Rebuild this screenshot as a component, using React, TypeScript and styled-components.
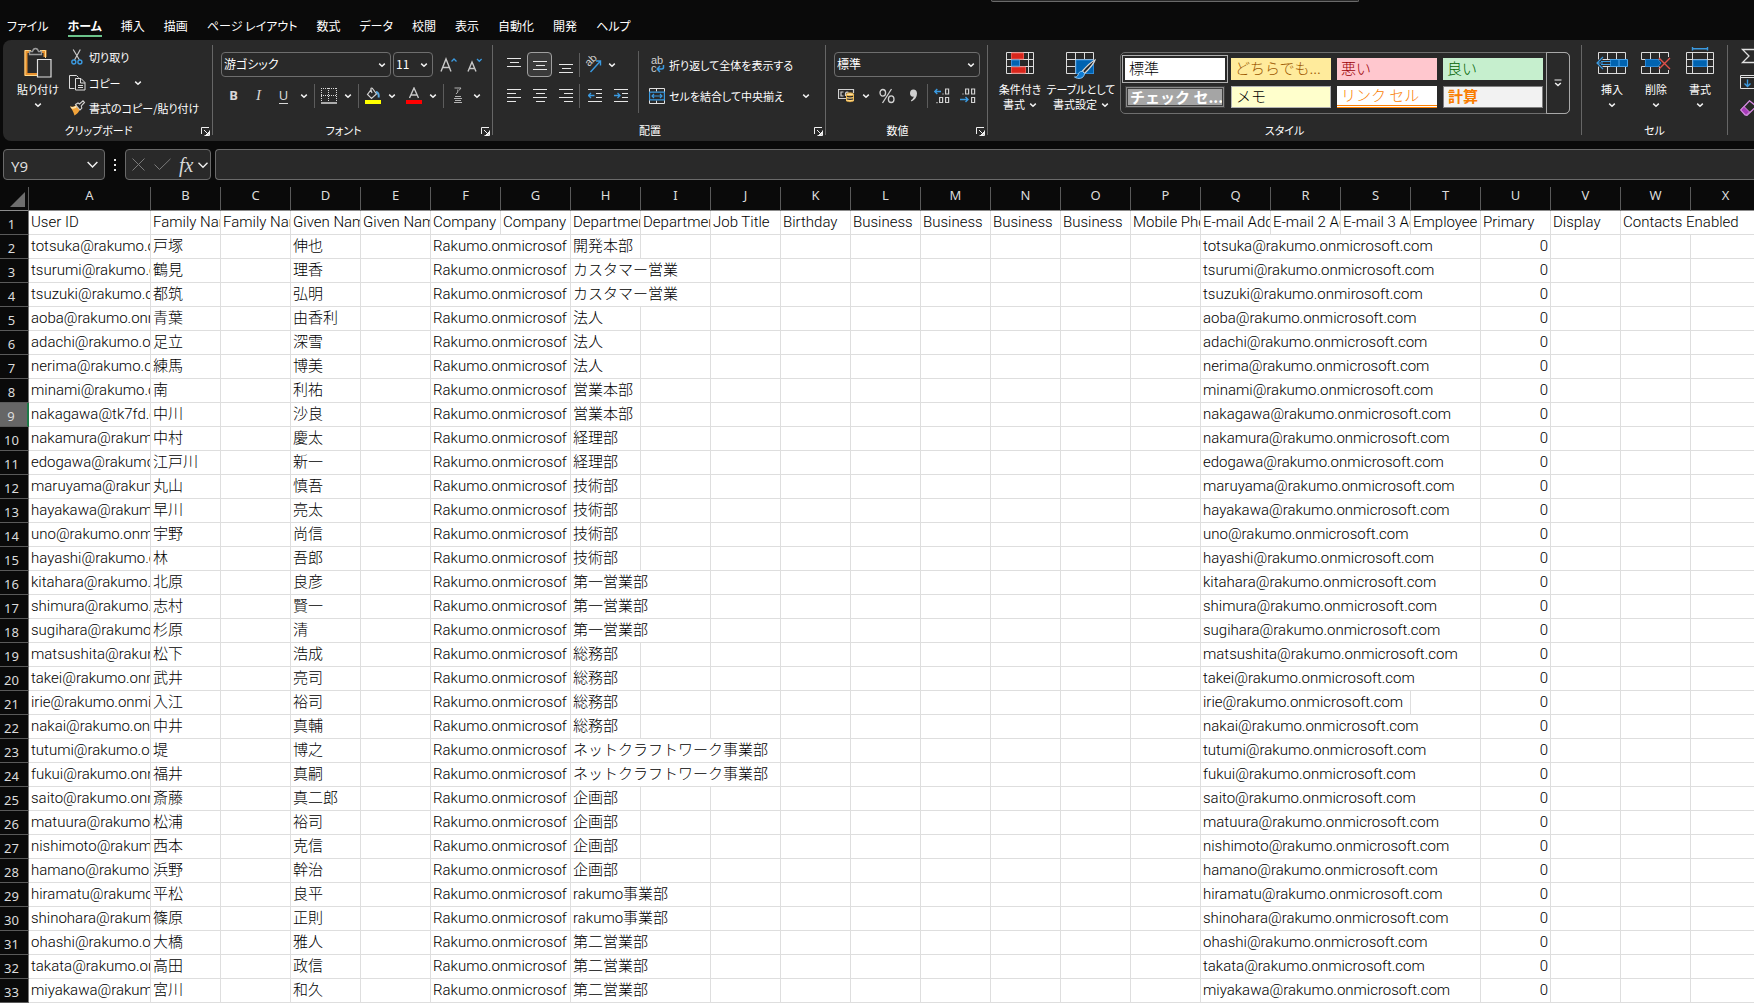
import React from "react";
import styled, { createGlobalStyle, css } from "styled-components";

const UI_FONT = '"Noto Sans", "Noto Sans CJK JP", sans-serif';
const KANA_FONT = '"Noto Sans CJK JP", sans-serif';
const CELL_FONT = 'Roboto, "Noto Sans CJK JP", sans-serif';

const GlobalStyle = createGlobalStyle`
  *, *::before, *::after { box-sizing: border-box; }
  html, body { margin: 0; background: #0a0a0a; }
  body { overflow: hidden; font-family: ${KANA_FONT}; color: #fff; }
  button, select, input { font: inherit; color: inherit; margin: 0; }
  svg { flex: none; }
`;

const Window = styled.div`
  min-height: 100vh;
  overflow: hidden;
  background: #0a0a0a;
`;

/* ---------- title strip and tabs ---------- */

const TitleStrip = styled.div`
  display: flex;
  justify-content: center;
  height: 12px;
  padding-left: 595px;
`;

const SearchEdge = styled.div`
  width: 368px;
  height: 2px;
  border: 1px solid #6a6a6a;
  border-top: 0;
  border-radius: 0 0 3px 3px;
  background: #292929;
`;

const Tabs = styled.nav`
  display: flex;
  height: 28px;
  padding-left: 7px;
  gap: 19px;
`;

const Tab = styled.button<{ $active?: boolean }>`
  height: 25px;
  padding: 4px 0 0;
  border: 0;
  border-bottom: 2px solid ${(p) => (p.$active ? "#6cc38b" : "transparent")};
  background: none;
  font-size: 12px;
  line-height: 19px;
  font-weight: ${(p) => (p.$active ? 700 : 400)};
  font-feature-settings: "palt";
  white-space: nowrap;
`;

/* ---------- ribbon ---------- */

const Ribbon = styled.div`
  display: flex;
  height: 101px;
  margin-left: 3px;
  padding-top: 5px;
  border-radius: 8px 0 0 8px;
  background: #292929;
  overflow: hidden;
  font-size: 11px;
  font-feature-settings: "palt";
`;

const GroupBox = styled.section<{ $width: number }>`
  flex: none;
  display: flex;
  flex-direction: column;
  width: ${(p) => p.$width}px;
`;

const GroupBody = styled.div<{ $pad?: number }>`
  display: flex;
  height: 75px;
  padding-left: ${(p) => p.$pad ?? 8}px;
`;

const GroupFoot = styled.div<{ $launcher?: boolean }>`
  display: grid;
  grid-template-columns: 1fr ${(p) => (p.$launcher ? 18 : 0)}px;
  align-items: center;
  height: 20px;
  line-height: 20px;
  text-align: center;
`;

const Launcher = styled.button`
  display: flex;
  padding: 2px 0 0 7px;
  border: 0;
  background: none;
`;

const GroupDivider = styled.div`
  flex: none;
  width: 1px;
  height: 90px;
  background: #666;
`;

const Stack = styled.div<{ $width?: number }>`
  flex: none;
  display: flex;
  flex-direction: column;
  gap: 6px;
  padding-top: 7px;
  width: ${(p) => (p.$width ? `${p.$width}px` : "auto")};
`;

const Row = styled.div<{ $gap?: number }>`
  display: flex;
  align-items: center;
  height: 25px;
  gap: ${(p) => p.$gap ?? 0}px;
`;

const Tool = styled.button<{ $width?: number; $on?: boolean }>`
  flex: none;
  display: flex;
  align-items: center;
  justify-content: center;
  width: ${(p) => p.$width ?? 22}px;
  height: 25px;
  padding: 0;
  border: 1px solid ${(p) => (p.$on ? "#a0a0a0" : "transparent")};
  border-radius: 4px;
  background: ${(p) => (p.$on ? "#3a3a3a" : "none")};
`;

const Thin = styled.div<{ $left: number; $right: number; $tall?: boolean }>`
  flex: none;
  width: 1px;
  height: ${(p) => (p.$tall ? 62 : 24)}px;
  margin: ${(p) => (p.$tall ? 6 : 0)}px ${(p) => p.$right}px 0 ${(p) => p.$left}px;
  background: #5c5c5c;
`;

const Spacer = styled.div<{ $size: number }>`
  flex: none;
  width: ${(p) => p.$size}px;
`;

const TextTool = styled.button`
  display: flex;
  align-items: center;
  gap: 2px;
  height: 25px;
  padding: 0;
  border: 0;
  background: none;
  white-space: nowrap;
`;

const IconSlot = styled.span`
  display: flex;
  justify-content: center;
  width: 20px;
`;

const ClipboardList = styled.div`
  display: flex;
  flex-direction: column;
  gap: 1px;
`;

const SplitRow = styled.div`
  display: flex;
  align-items: center;
  justify-content: space-between;
  height: 25px;
`;

const BigTool = styled.button<{ $width: number }>`
  flex: none;
  display: flex;
  flex-direction: column;
  align-items: center;
  width: ${(p) => p.$width}px;
  height: 75px;
  padding: 2px 0 0;
  border: 0;
  background: none;
  line-height: 15px;
  white-space: nowrap;
`;

const BigIcon = styled.span`
  display: block;
  height: 35px;
`;

const BigLine = styled.span`
  display: flex;
  align-items: center;
  gap: 4px;
  height: 15px;
`;

const PickerBox = styled.label<{ $width: number }>`
  flex: none;
  display: grid;
  grid-template-columns: 1fr 16px;
  align-items: center;
  width: ${(p) => p.$width}px;
  height: 25px;
  border: 1px solid #6e6e6e;
  border-radius: 4px;
  background: #292929;
`;

const Picker = styled.select`
  grid-area: 1 / 1 / 2 / 3;
  width: 100%;
  height: 23px;
  padding: 0 0 1px 2px;
  border: 0;
  outline: 0;
  appearance: none;
  background: none;
  font-size: 12px;
  font-feature-settings: "palt";
  line-height: 20px;
`;

const PickerArrow = styled.span`
  grid-area: 1 / 2 / 2 / 3;
  display: flex;
  justify-content: center;
  pointer-events: none;
`;

const Letter = styled.span<{ $kind: "b" | "i" | "u" }>`
  font-family: ${(p) => (p.$kind === "i" ? '"Liberation Serif", serif' : UI_FONT)};
  font-size: ${(p) => (p.$kind === "i" ? 15 : 13)}px;
  line-height: 15px;
  color: #d8d8d8;
  ${(p) => p.$kind === "b" && css`font-weight: 700;`}
  ${(p) => p.$kind === "i" && css`font-style: italic;`}
  ${(p) => p.$kind === "u" && css`border-bottom: 1px solid #d8d8d8;`}
`;

/* ---------- style gallery ---------- */

const Gallery = styled.div`
  flex: none;
  display: flex;
  height: 62px;
  margin: 7px 0 0 6px;
  border: 1px solid #6e6e6e;
  border-radius: 5px;
`;

const Swatches = styled.div`
  display: grid;
  grid-template-columns: repeat(4, 100px);
  grid-auto-rows: 22px;
  gap: 6px;
  padding: 5px 4px;
`;

type SwatchLook = "plain" | "selected" | "check" | "note" | "link" | "calc";

const Swatch = styled.button<{ $bg: string; $fg: string; $look: SwatchLook }>`
  padding: 0 4px 2px;
  border: 0;
  background: ${(p) => p.$bg};
  color: ${(p) => p.$fg};
  font-size: 15px;
  line-height: 18px;
  font-weight: 300;
  font-feature-settings: normal;
  text-align: left;
  white-space: nowrap;
  overflow: hidden;
  ${(p) => p.$look === "selected" && css`outline: 1px solid #b0b0b0; outline-offset: 2px;`}
  ${(p) =>
    p.$look === "check" &&
    css`
      border: 3px double #3f3f3f;
      outline: 1px solid #8a8a8a;
      outline-offset: -2px;
      padding: 0 2px 1px;
      line-height: 14px;
      font-weight: 700;
    `}
  ${(p) => p.$look === "note" && css`border: 1px solid #b2b2b2;`}
  ${(p) => p.$look === "link" && css`border-bottom: 3px double #ff8001;`}
  ${(p) => p.$look === "calc" && css`border: 1px solid #7f7f7f; font-weight: 700;`}
`;

const GalleryMore = styled.button`
  display: flex;
  align-items: center;
  justify-content: center;
  width: 24px;
  height: 62px;
  margin: -1px;
  padding: 0;
  border: 1px solid #a8a8a8;
  border-radius: 0 5px 5px 0;
  background: none;
`;

const EditTools = styled.div`
  display: flex;
  flex-direction: column;
  gap: 10px;
  padding-top: 3px;
`;

const PlainButton = styled.button`
  display: flex;
  padding: 0;
  border: 0;
  background: none;
`;

/* ---------- formula bar ---------- */

const FormulaBar = styled.div`
  display: flex;
  height: 46px;
  padding: 8px 0 7px 3px;
  font-family: ${UI_FONT};
`;

const Boxed = styled.div<{ $width: number; $end: number }>`
  flex: none;
  display: flex;
  align-items: center;
  width: ${(p) => p.$width}px;
  height: 31px;
  padding: 0 ${(p) => p.$end}px 0 6px;
  border: 1px solid #6a6a6a;
  border-radius: 4px;
  background: #292929;
`;

const NameInput = styled.input`
  flex: 1;
  min-width: 0;
  padding: 3px 0 0 1px;
  border: 0;
  outline: 0;
  background: none;
  font-size: 15px;
  line-height: 20px;
  color: #dcdcdc;
`;

const Grip = styled.div`
  display: flex;
  flex-direction: column;
  justify-content: center;
  align-items: center;
  gap: 3px;
  width: 20px;
`;

const GripDot = styled.i`
  width: 2px;
  height: 2px;
  background: #e6e6e6;
`;

const FormulaInput = styled.input`
  flex: 1;
  height: 31px;
  margin-left: 4px;
  padding: 0 8px;
  border: 1px solid #6a6a6a;
  border-right: 0;
  border-radius: 4px 0 0 4px;
  outline: 0;
  background: #292929;
`;

const FxMark = styled.span`
  width: 15px;
  margin: 0 3px 0 8px;
  font-family: "Liberation Serif", serif;
  font-size: 20px;
  line-height: 20px;
  font-style: italic;
  color: #d8d8d8;
`;

/* ---------- sheet ---------- */

const SheetView = styled.main`
  overflow: hidden;
`;

const Sheet = styled.table`
  width: 1761px;
  table-layout: fixed;
  border-collapse: separate;
  border-spacing: 0;
  background: #fff;
  color: #000;
`;

const ColHead = styled.th<{ $corner?: boolean }>`
  height: 24px;
  padding: 0 0 ${(p) => (p.$corner ? 0 : 7)}px;
  border-right: 1px solid #5a5a5a;
  border-bottom: 1px solid #8c8c8c;
  background: #0a0a0a;
  color: #dcdcdc;
  font-family: ${UI_FONT};
  font-size: 13px;
  line-height: 16px;
  font-weight: 400;
`;

const RowHead = styled.th<{ $on?: boolean }>`
  height: 24px;
  padding: 2px 5px 0 0;
  border-right: ${(p) => (p.$on ? "2px solid #1e7a48" : "1px solid #7a7a7a")};
  border-bottom: 1px solid #5a5a5a;
  background: ${(p) => (p.$on ? "#666" : "#0a0a0a")};
  color: #dcdcdc;
  font-family: ${UI_FONT};
  font-size: 13px;
  line-height: 16px;
  font-weight: 400;
`;

const Cell = styled.td<{ $right?: boolean }>`
  height: 24px;
  padding: 1px 2px 1px 2px;
  border-right: 1px solid #dedede;
  border-bottom: 1px solid #dedede;
  font-family: ${CELL_FONT};
  font-size: 15px;
  line-height: 21px;
  font-weight: 300;
  text-align: ${(p) => (p.$right ? "right" : "left")};
  white-space: nowrap;
  overflow: hidden;
`;

/* ---------- icons ---------- */

const Chevron = ({ size = 8 }: { size?: number }) => (
  <svg width={size} height={size} viewBox="0 0 8 8" fill="none" stroke="#f0f0f0" strokeWidth={size > 8 ? 0.9 : 1.5}>
    <path d={size > 8 ? "M1 2.500 4 5.500 7 2.500" : "M1.200 2.600 4 5.200 6.800 2.600"} />
  </svg>
);

const LauncherIcon = () => (
  <svg width="9" height="9" viewBox="0 0 9 9" fill="none" stroke="#f0f0f0">
    <path d="M.5 7V.5H8M3 3l4 4M8.500 3.500V8.500H3.500" />
    <path d="M5 7.500h2.500V5" />
  </svg>
);

const PasteIcon = () => (
  <svg width="28" height="31" viewBox="0 0 28 31" fill="none">
    <path d="M6.500 4.500H2V27.500H13.500M17 4.500h4V10" stroke="#e8912d" strokeWidth="3" />
    <path d="M1 3.500h6M16 3.500h5.500V11M1 3.500V28.500H13" stroke="#ffd98c" />
    <path d="M5.500 7.500V4.500h3c.5-2 1.300-3 3-3s2.500 1 3 3h3v3z" fill="#292929" stroke="#9a9a9a" strokeWidth="1.300" />
    <path d="M13.500 12.500h13.500v17.500H13.500z" fill="#2e2e2e" stroke="#e0e0e0" strokeWidth="1.200" />
  </svg>
);

const CutIcon = () => (
  <svg width="12" height="16" viewBox="0 0 12 16" fill="none">
    <path d="M2.200.5 8.500 11M9.300.5 3.500 11" stroke="#c8c8c8" strokeWidth="1.200" />
    <circle cx="2.800" cy="13" r="2" stroke="#3b9ae0" strokeWidth="1.400" />
    <circle cx="8.900" cy="13" r="2" stroke="#3b9ae0" strokeWidth="1.400" />
  </svg>
);

const CopyIcon = () => (
  <svg width="17" height="17" viewBox="0 0 17 17" fill="none" stroke="#dcdcdc">
    <path d="M5.500 14.500h-5V1.500h7l2 2" />
    <path d="M6.500 4.500h5.500l4 4v7.500H6.500zM11.500 4.500V9h4.500M9 11.500h5M9 13.500h5" />
  </svg>
);

const BrushIcon = () => (
  <svg width="17" height="16" viewBox="0 0 17 16">
    <path d="M1 6.500c2.500.8 4.500.2 6-1.500l4 4.500c-1.200 2.500-3 4.500-5.500 6C4.500 12 3 9 1 6.500z" fill="#f2a33a" />
    <path d="M1 6.500c2 .9 4 .6 6-1l1 1.200C6.500 8.500 4.500 9 2.500 8.500z" fill="#ffe2a6" />
    <path d="M6.500 4.500 9 3l1.500 1L14 .8l1.500 1.600L12.300 6l.5 2-1.800 2z" fill="#292929" stroke="#d0d0d0" strokeWidth="1.100" />
  </svg>
);

const FontSizeIcon = ({ up }: { up?: boolean }) => (
  <svg width="17" height="16" viewBox="0 0 17 16" fill="none">
    {up ? (
      <path d="M1 14.500 6 2l5 12.500M2.800 10.500h6.400" stroke="#c8c8c8" strokeWidth="1.400" />
    ) : (
      <path d="M2 14.500 6 5l4 9.500M3.500 11.500h5" stroke="#c8c8c8" strokeWidth="1.400" />
    )}
    <path d={up ? "M11.500 4.500 14 2l2.500 2.500" : "M11 2l2.300 2.300L15.600 2"} stroke="#3b9ae0" strokeWidth="1.300" />
  </svg>
);

const BorderIcon = () => (
  <svg width="16" height="16" viewBox="0 0 16 16" fill="none" stroke="#d8d8d8">
    <path d="M0 .5h16M.5 0v14M15.500 0v14M7.500 0v14M0 7.500h16" strokeDasharray="1 1" />
    <path d="M0 15h16" strokeWidth="1.600" />
  </svg>
);

const FillIcon = () => (
  <svg width="16" height="18" viewBox="0 0 16 18" fill="none">
    <path d="M6.500 2 2.500 7.500l4 4 5-4.500-4-5.500c-1-1.200-2 0-1.500 1.500l1 3" stroke="#d0d0d0" strokeWidth="1.200" />
    <path d="M11 5c2 0 3 2 2.700 5.500" stroke="#5ba8e0" strokeWidth="2" />
    <rect y="13" width="16" height="4" fill="#ffff00" />
  </svg>
);

const FontColorIcon = () => (
  <svg width="16" height="18" viewBox="0 0 16 18" fill="none">
    <path d="M3.500 11 8 1l4.500 10M5 8h6" stroke="#c8c8c8" strokeWidth="1.400" />
    <rect y="13" width="16" height="4" fill="#ff0000" />
  </svg>
);

const RubyIcon = () => (
  <svg width="10" height="17" viewBox="0 0 10 17" fill="none" stroke="#b4b4b4">
    <path d="M1.500 1h6.500L6 3.500M4.800 2.500v2.500L3 7" />
    <path d="M2 9.500h6M1 11.500h8M2 13.500h6M1 15.500h8" strokeWidth="1.200" />
  </svg>
);

type AlignKind = "top" | "middle" | "bottom" | "left" | "center" | "right";
const ALIGN_PATHS: Record<AlignKind, string> = {
  top: "M0 1.500h14M3 5.500h9M0 9.500h14",
  middle: "M0 4.500h14M3 8.500h9M0 12.500h14",
  bottom: "M0 7.500h14M3 11.500h9M0 15.500h14",
  left: "M0 1.500h14M0 5.500h9M0 9.500h14M0 13.500h9",
  center: "M0 1.500h14M3 5.500h9M0 9.500h14M3 13.500h9",
  right: "M0 1.500h14M5 5.500h9M0 9.500h14M5 13.500h9",
};
const AlignIcon = ({ kind }: { kind: AlignKind }) => (
  <svg width="14" height="16" viewBox="0 0 14 16" stroke="#e6e6e6">
    <path d={ALIGN_PATHS[kind]} />
  </svg>
);

const IndentIcon = ({ more }: { more?: boolean }) => (
  <svg width="14" height="16" viewBox="0 0 14 16" fill="none" stroke="#e6e6e6">
    <path d="M0 1.500h14M8 5.500h6M8 9.500h6M0 13.500h14" />
    <path d={more ? "M0 7.500h6M3.500 5 6 7.500 3.500 10" : "M.5 7.500h6M3 5 .5 7.500 3 10"} stroke="#3b9ae0" strokeWidth="1.300" />
  </svg>
);

const SvgText = styled.text`
  font-family: "Liberation Sans", sans-serif;
  fill: #d0d0d0;
`;

const OrientIcon = () => (
  <svg width="17" height="17" viewBox="0 0 17 17" fill="none">
    <SvgText x="0" y="0" fontSize="11" transform="translate(4 11) rotate(-45)">ab</SvgText>
    <path d="M5.500 16 15.500 5M11 5h4.500v4.500" stroke="#3b9ae0" strokeWidth="1.400" />
  </svg>
);

const WrapIcon = () => (
  <svg width="15" height="18" viewBox="0 0 15 18" fill="none">
    <SvgText x="1" y="8" fontSize="11">ab</SvgText>
    <SvgText x="1" y="16" fontSize="11">c</SvgText>
    <path d="M13.500 9v2.500c0 1-.8 1.500-2 1.500H7.500M10 10 7.200 13l2.800 3" stroke="#3b9ae0" strokeWidth="1.500" />
  </svg>
);

const MergeIcon = () => (
  <svg width="16" height="16" viewBox="0 0 16 16" fill="none">
    <path d="M.5 4V.5h15V4M.5 12v3.500h15V12M7.500.5v3M7.500 12.500v3" stroke="#e0e0e0" />
    <path d="M.6 4.200h14.800v7.600H.6z" stroke="#3b9ae0" strokeWidth="1.200" />
    <path d="M3 8h10M5 6 3 8l2 2M11 6l2 2-2 2" stroke="#3b9ae0" strokeWidth="1.200" />
  </svg>
);

const MoneyIcon = () => (
  <svg width="17" height="15" viewBox="0 0 17 15" fill="none">
    <path d="M8 10.500H.5v-9h15V5M5.500 4H3v4h2.500M10.500 4.500c-1-.8-2.500-.6-3 1V8" stroke="#d0d0d0" strokeWidth="1.200" />
    <path d="M8.500 6.500v6.500c0 .8 7 .8 7 0V6.500" fill="#292929" stroke="#e9b44c" />
    <ellipse cx="12" cy="6.300" rx="3.600" ry="1.400" fill="#ffe0a0" stroke="#e9b44c" />
    <path d="M8.500 9.500c1 .8 6 .8 7 0M8.500 12c1 .8 6 .8 7 0" stroke="#ffd27a" strokeWidth="1.200" />
  </svg>
);

const PercentIcon = () => (
  <svg width="16" height="16" viewBox="0 0 16 16" fill="none" stroke="#d0d0d0" strokeWidth="1.300">
    <ellipse cx="3.800" cy="4.800" rx="2.800" ry="3.300" />
    <ellipse cx="12.200" cy="11.200" rx="2.800" ry="3.300" />
    <path d="M12.500 1 3.500 15" />
  </svg>
);

const CommaIcon = () => (
  <svg width="9" height="15" viewBox="0 0 9 15">
    <path d="M4.300 1.500c2.300 0 3.700 1.600 3.700 4 0 3.500-2 6.500-5.500 8l-.6-1.200c1.700-1 2.700-2.300 2.800-3.700C2.500 9 1 7.500 1 5.200c0-2.200 1.300-3.700 3.300-3.700z" fill="#d0d0d0" />
  </svg>
);

const DecimalIcon = ({ less }: { less?: boolean }) => (
  <svg width="16" height="17" viewBox="0 0 16 17" fill="none" stroke="#d0d0d0" strokeWidth="1.200">
    {less ? (
      <path d="M5.600 2h3v5h-3zM11.600 2h3v5h-3zM3 6.400v1.200M11.600 10.500h3v5h-3z" />
    ) : (
      <path d="M11.600 2h3v5h-3zM9 6.400v1.200M5.600 10.500h3v5h-3zM11.600 10.500h3v5h-3zM3 15v1.200" />
    )}
    <path
      d={less ? "M0 12.500h8M5.500 10 8 12.500 5.500 15" : "M.5 4.500h6.500M3.300 2 .7 4.500l2.600 2.500"}
      stroke="#3b9ae0"
      strokeWidth="1.400"
    />
  </svg>
);

const GRID = "M.5.5h27v21H.5zM9.500.5v21M18.500.5v21M.5 7.500h27M.5 14.500h27";

const CondFormatIcon = () => (
  <svg width="28" height="32" viewBox="0 -5 28 32" fill="none">
    <path d="M.5.5h27v21H.5zM5.500.5v21M22.500.5v21M.5 7.500h27M.5 14.500h27" stroke="#dcdcdc" />
    <path d="M5.500 1h12v6h-12zM5.500 15h14v6h-14z" fill="#d9261c" stroke="#e8564e" />
    <path d="M5.500 8h8v6h-8z" fill="#0063b1" stroke="#3b8fd6" />
  </svg>
);

const TableFormatIcon = () => (
  <svg width="30" height="32" viewBox="0 -5 30 32" fill="none">
    <path d={GRID} stroke="#dcdcdc" />
    <path d="M10 8h17.500v13.500H10z" fill="#0063b1" stroke="#2b88d8" />
    <path d="M29 8c-4 2-9 7-12.500 11l2 2.500C23 17 28 11.500 29 8z" fill="#292929" stroke="#d8d8d8" strokeWidth="1.200" />
    <path d="M16.500 19.500c-3-.5-4 1.500-4.500 3.500-.5 1.500-2 2-3.500 2 3.500 2.500 9.500 2 10-3.500z" fill="#0e7ad0" stroke="#8cc6f2" />
  </svg>
);

const InsertCellsIcon = () => (
  <svg width="32" height="32" viewBox="-2 -5 32 32" fill="none">
    <path d={GRID} stroke="#dcdcdc" />
    <path d="M12 7.500h17.500v7H12z" fill="#0063b1" stroke="#4aa3e8" />
    <path d="M21 8v6" stroke="#4aa3e8" />
    <path d="M12 9.500H3M12 12.500H3M5 5-1 11l6 6" stroke="#292929" strokeWidth="3" />
    <path d="M-1 11h6M3 9.500h10M3 12.500h10M5 5-1 11l6 6" stroke="#3b9ae0" strokeWidth="1.200" />
  </svg>
);

const DeleteCellsIcon = () => (
  <svg width="30" height="32" viewBox="0 -5 30 32" fill="none">
    <path d="M.5 7.500V.5h27V5M.5 14.500v7h27V18M9.500.5v7M18.500.5v7M9.500 14.500v7M18.500 14.500v7M.5 7.500h17M.5 14.500h17" stroke="#dcdcdc" />
    <path d="M4.500 7.500H17l3 3.500-3 3.500H4.500z" fill="#0063b1" stroke="#2b88d8" />
    <path d="M18 6l11 11M29 6 18 17" stroke="#e0504a" strokeWidth="1.400" />
  </svg>
);

const FormatCellsIcon = () => (
  <svg width="28" height="32" viewBox="0 -5 28 32" fill="none">
    <path d="M6.500-3.200h15M6.500-5v3.500M21.500-5v3.500" stroke="#3b9ae0" strokeWidth="1.400" />
    <path d="M.5.5h27v21H.5zM6.500.5v21M21.500.5v21M.5 7.500h27M.5 14.500h27" stroke="#dcdcdc" />
    <path d="M7 8h14v6.500H7z" fill="#0063b1" stroke="#2b88d8" />
  </svg>
);

const MoreIcon = () => (
  <svg width="8" height="8" viewBox="0 0 8 8" fill="none" stroke="#f0f0f0">
    <path d="M.5 1h7" />
    <path d="M1.200 4 4 6.500 6.800 4" strokeWidth="1.500" />
  </svg>
);

const SumIcon = () => (
  <svg width="18" height="16" viewBox="0 0 18 16" fill="none">
    <path d="M16 3.500V1.500H2.500L9 8l-6.500 6.500H16v-2" stroke="#e0e0e0" strokeWidth="1.300" />
  </svg>
);

const FillDownIcon = () => (
  <svg width="18" height="16" viewBox="0 0 18 16" fill="none">
    <path d="M.5 1.500h17v13H.5zM.5 3.500h17" stroke="#e0e0e0" />
    <path d="M7.500 5.500v7M4.500 9.500l3 3 3-3" stroke="#3b9ae0" strokeWidth="1.400" />
  </svg>
);

const EraserIcon = () => (
  <svg width="18" height="16" viewBox="0 0 18 16" fill="none">
    <path d="M.8 10 9.500.8l7 5.500L7 15.200 5 15z" stroke="#d58be0" strokeWidth="1.300" />
    <path d="M.8 10 4 6.500 9.500 12 6 15.300z" fill="#a83cba" stroke="#d58be0" />
  </svg>
);

/* ---------- data ---------- */

const TABS = ["ファイル", "ホーム", "挿入", "描画", "ページ レイアウト", "数式", "データ", "校閲", "表示", "自動化", "開発", "ヘルプ"];

const SWATCHES: { text: string; bg: string; fg: string; look: SwatchLook }[] = [
  { text: "標準", bg: "#ffffff", fg: "#000000", look: "selected" },
  { text: "どちらでも...", bg: "#ffeb9c", fg: "#9c5700", look: "plain" },
  { text: "悪い", bg: "#ffc7ce", fg: "#9c0006", look: "plain" },
  { text: "良い", bg: "#c6efce", fg: "#006100", look: "plain" },
  { text: "チェック セ...", bg: "#a5a5a5", fg: "#ffffff", look: "check" },
  { text: "メモ", bg: "#ffffcc", fg: "#000000", look: "note" },
  { text: "リンク セル", bg: "#ffffff", fg: "#fa7d00", look: "link" },
  { text: "計算", bg: "#f2f2f2", fg: "#fa7d00", look: "calc" },
];

const COLUMNS = "ABCDEFGHIJKLMNOPQRSTUVWX".split("");

const HEADINGS: Record<string, string> = {
  A: "User ID",
  B: "Family Name",
  C: "Family Name",
  D: "Given Name",
  E: "Given Name",
  F: "Company",
  G: "Company",
  H: "Department",
  I: "Department",
  J: "Job Title",
  K: "Birthday",
  L: "Business",
  M: "Business",
  N: "Business",
  O: "Business",
  P: "Mobile Phone",
  Q: "E-mail Address",
  R: "E-mail 2 Address",
  S: "E-mail 3 Address",
  T: "Employee",
  U: "Primary",
  V: "Display",
  W: "Contacts Enabled",
};

const PEOPLE: [string, string, string, string][] = [
  ["totsuka", "戸塚", "伸也", "開発本部"],
  ["tsurumi", "鶴見", "理香", "カスタマー営業"],
  ["tsuzuki", "都筑", "弘明", "カスタマー営業"],
  ["aoba", "青葉", "由香利", "法人"],
  ["adachi", "足立", "深雪", "法人"],
  ["nerima", "練馬", "博美", "法人"],
  ["minami", "南", "利祐", "営業本部"],
  ["nakagawa", "中川", "沙良", "営業本部"],
  ["nakamura", "中村", "慶太", "経理部"],
  ["edogawa", "江戸川", "新一", "経理部"],
  ["maruyama", "丸山", "慎吾", "技術部"],
  ["hayakawa", "早川", "亮太", "技術部"],
  ["uno", "宇野", "尚信", "技術部"],
  ["hayashi", "林", "吾郎", "技術部"],
  ["kitahara", "北原", "良彦", "第一営業部"],
  ["shimura", "志村", "賢一", "第一営業部"],
  ["sugihara", "杉原", "清", "第一営業部"],
  ["matsushita", "松下", "浩成", "総務部"],
  ["takei", "武井", "亮司", "総務部"],
  ["irie", "入江", "裕司", "総務部"],
  ["nakai", "中井", "真輔", "総務部"],
  ["tutumi", "堤", "博之", "ネットクラフトワーク事業部"],
  ["fukui", "福井", "真嗣", "ネットクラフトワーク事業部"],
  ["saito", "斎藤", "真二郎", "企画部"],
  ["matuura", "松浦", "裕司", "企画部"],
  ["nishimoto", "西本", "克信", "企画部"],
  ["hamano", "浜野", "幹治", "企画部"],
  ["hiramatu", "平松", "良平", "rakumo事業部"],
  ["shinohara", "篠原", "正則", "rakumo事業部"],
  ["ohashi", "大橋", "雅人", "第二営業部"],
  ["takata", "高田", "政信", "第二営業部"],
  ["miyakawa", "宮川", "和久", "第二営業部"],
];

type CellSpec = { text: string; span?: number; right?: boolean };

const departmentSpan = (name: string) => (name.length > 12 ? 3 : name.length > 4 ? 2 : 1);

const personCells = ([id, family, given, dept]: [string, string, string, string]): Record<string, CellSpec> => {
  const domain = id === "tsuzuki" ? "rakumo.onmirosoft.com" : "rakumo.onmicrosoft.com";
  return {
    A: { text: id === "nakagawa" ? "nakagawa@tk7fd.onmicrosoft.com" : `${id}@rakumo.onmicrosoft.com` },
    B: { text: family },
    D: { text: given },
    F: { text: "Rakumo.onmicrosof", span: 2 },
    H: { text: dept, span: departmentSpan(dept) },
    Q: { text: `${id}@${domain}`, span: id === "irie" ? 3 : 4 },
    U: { text: "0", right: true },
  };
};

const headingCells: Record<string, CellSpec> = Object.fromEntries(
  Object.entries(HEADINGS).map(([col, text]) => [col, { text, span: col === "W" ? 2 : 1 }]),
);

const SheetRow = ({ index, cells }: { index: number; cells: Record<string, CellSpec> }) => {
  const out: React.ReactNode[] = [];
  for (let i = 0; i < COLUMNS.length; ) {
    const col = COLUMNS[i];
    const spec = cells[col];
    const span = spec?.span ?? 1;
    out.push(
      <Cell key={col} colSpan={span} $right={spec?.right}>
        {spec?.text}
      </Cell>,
    );
    i += span;
  }
  return (
    <tr>
      <RowHead scope="row" $on={index === 9}>
        {index}
      </RowHead>
      {out}
    </tr>
  );
};

/* ---------- parts ---------- */

const Group = ({
  width,
  label,
  pad,
  launcher,
  children,
}: {
  width: number;
  label?: string;
  pad?: number;
  launcher?: boolean;
  children: React.ReactNode;
}) => (
  <>
    <GroupBox $width={width} aria-label={label}>
      <GroupBody $pad={pad}>{children}</GroupBody>
      <GroupFoot $launcher={launcher}>
        <span>{label}</span>
        {launcher && (
          <Launcher aria-label={`${label}の設定`}>
            <LauncherIcon />
          </Launcher>
        )}
      </GroupFoot>
    </GroupBox>
    <GroupDivider />
  </>
);

const Drop = ({ label }: { label: string }) => (
  <Tool $width={15} aria-label={label}>
    <Chevron />
  </Tool>
);

const Combo = ({ width, label, value }: { width: number; label: string; value: string }) => (
  <PickerBox $width={width}>
    <Picker aria-label={label} defaultValue={value}>
      <option>{value}</option>
    </Picker>
    <PickerArrow>
      <Chevron />
    </PickerArrow>
  </PickerBox>
);

const Big = ({ width, icon, lines }: { width: number; icon: React.ReactNode; lines: [string, string] }) => (
  <BigTool $width={width}>
    <BigIcon>{icon}</BigIcon>
    <BigLine>{lines[0]}</BigLine>
    <BigLine>
      {lines[1]}
      <Chevron />
    </BigLine>
  </BigTool>
);

export default function App() {
  return (
    <Window>
      <GlobalStyle />
      <TitleStrip>
        <SearchEdge />
      </TitleStrip>
      <Tabs>
        {TABS.map((tab) => (
          <Tab key={tab} $active={tab === "ホーム"}>
            {tab}
          </Tab>
        ))}
      </Tabs>

      <Ribbon>
        <Group width={209} label="クリップボード" pad={6} launcher>
          <Big width={58} icon={<PasteIcon />} lines={["貼り付け", ""]} />
          <ClipboardList>
            <TextTool>
              <IconSlot><CutIcon /></IconSlot>
              切り取り
            </TextTool>
            <Row>
              <TextTool>
                <IconSlot><CopyIcon /></IconSlot>
                コピー
              </TextTool>
              <Spacer $size={10} />
              <Drop label="コピーのオプション" />
            </Row>
            <TextTool>
              <IconSlot><BrushIcon /></IconSlot>
              書式のコピー/貼り付け
            </TextTool>
          </ClipboardList>
        </Group>

        <Group width={279} label="フォント" launcher>
          <Stack>
            <Row>
              <Combo width={170} label="フォント名" value="游ゴシック" />
              <Spacer $size={2} />
              <Combo width={40} label="フォント サイズ" value="11" />
              <Spacer $size={2} />
              <Tool $width={26} aria-label="拡大"><FontSizeIcon up /></Tool>
              <Tool $width={26} aria-label="縮小"><FontSizeIcon /></Tool>
            </Row>
            <Row>
              <Tool $width={25} aria-label="太字"><Letter $kind="b">B</Letter></Tool>
              <Tool $width={25} aria-label="斜体"><Letter $kind="i">I</Letter></Tool>
              <Tool $width={25} aria-label="下線"><Letter $kind="u">U</Letter></Tool>
              <Drop label="下線の種類" />
              <Thin $left={3} $right={3} />
              <Tool aria-label="罫線"><BorderIcon /></Tool>
              <Drop label="罫線の種類" />
              <Thin $left={3} $right={3} />
              <Tool aria-label="塗りつぶし"><FillIcon /></Tool>
              <Drop label="塗りつぶしの色" />
              <Spacer $size={4} />
              <Tool aria-label="フォントの色"><FontColorIcon /></Tool>
              <Drop label="フォントの色の一覧" />
              <Thin $left={3} $right={3} />
              <Tool aria-label="ふりがな"><RubyIcon /></Tool>
              <Drop label="ふりがなの設定" />
            </Row>
          </Stack>
        </Group>

        <Group width={332} label="配置" launcher>
          <Stack $width={134}>
            <Row>
              <Row $gap={1}>
                <Tool $width={25} aria-label="上揃え"><AlignIcon kind="top" /></Tool>
                <Tool $width={25} aria-label="上下中央揃え" $on><AlignIcon kind="middle" /></Tool>
                <Tool $width={25} aria-label="下揃え"><AlignIcon kind="bottom" /></Tool>
              </Row>
              <Thin $left={1} $right={2} />
              <Tool aria-label="方向"><OrientIcon /></Tool>
              <Drop label="方向の一覧" />
            </Row>
            <Row>
              <Row $gap={1}>
                <Tool $width={25} aria-label="左揃え"><AlignIcon kind="left" /></Tool>
                <Tool $width={25} aria-label="中央揃え"><AlignIcon kind="center" /></Tool>
                <Tool $width={25} aria-label="右揃え"><AlignIcon kind="right" /></Tool>
              </Row>
              <Thin $left={1} $right={2} />
              <Row $gap={1}>
                <Tool $width={25} aria-label="インデントを減らす"><IndentIcon /></Tool>
                <Tool $width={25} aria-label="インデントを増やす"><IndentIcon more /></Tool>
              </Row>
            </Row>
          </Stack>
          <Thin $left={3} $right={8} $tall />
          <Stack $width={166}>
            <SplitRow>
              <TextTool>
                <IconSlot><WrapIcon /></IconSlot>
                折り返して全体を表示する
              </TextTool>
            </SplitRow>
            <SplitRow>
              <TextTool>
                <IconSlot><MergeIcon /></IconSlot>
                セルを結合して中央揃え
              </TextTool>
              <Drop label="セルの結合の一覧" />
            </SplitRow>
          </Stack>
        </Group>

        <Group width={161} label="数値" launcher>
          <Stack>
            <Combo width={146} label="表示形式" value="標準" />
            <Row>
              <Tool $width={24} aria-label="通貨表示形式"><MoneyIcon /></Tool>
              <Drop label="通貨の一覧" />
              <Spacer $size={2} />
              <Row $gap={2}>
                <Tool $width={24} aria-label="パーセント"><PercentIcon /></Tool>
                <Tool $width={24} aria-label="桁区切り"><CommaIcon /></Tool>
                <Thin $left={0} $right={0} />
                <Tool $width={24} aria-label="小数点以下を増やす"><DecimalIcon /></Tool>
                <Tool $width={24} aria-label="小数点以下を減らす"><DecimalIcon less /></Tool>
              </Row>
            </Row>
          </Stack>
        </Group>

        <Group width={593} label="スタイル" pad={4}>
          <Big width={56} icon={<CondFormatIcon />} lines={["条件付き", "書式"]} />
          <Big width={66} icon={<TableFormatIcon />} lines={["テーブルとして", "書式設定"]} />
          <Gallery>
            <Swatches>
              {SWATCHES.map((s) => (
                <Swatch key={s.text} $bg={s.bg} $fg={s.fg} $look={s.look}>
                  {s.text}
                </Swatch>
              ))}
            </Swatches>
            <GalleryMore aria-label="その他のスタイル">
              <MoreIcon />
            </GalleryMore>
          </Gallery>
        </Group>

        <Group width={145} label="セル">
          <Big width={44} icon={<InsertCellsIcon />} lines={["挿入", ""]} />
          <Big width={44} icon={<DeleteCellsIcon />} lines={["削除", ""]} />
          <Big width={44} icon={<FormatCellsIcon />} lines={["書式", ""]} />
        </Group>

        <GroupBox $width={60}>
          <GroupBody $pad={12}>
            <EditTools>
              <PlainButton aria-label="オート SUM"><SumIcon /></PlainButton>
              <PlainButton aria-label="フィル"><FillDownIcon /></PlainButton>
              <PlainButton aria-label="クリア"><EraserIcon /></PlainButton>
            </EditTools>
          </GroupBody>
        </GroupBox>
      </Ribbon>

      <FormulaBar>
        <Boxed $width={102} $end={5}>
          <NameInput aria-label="名前ボックス" defaultValue="Y9" />
          <Chevron size={13} />
        </Boxed>
        <Grip>
          <GripDot />
          <GripDot />
          <GripDot />
        </Grip>
        <Boxed $width={86} $end={1}>
          <PlainButton aria-label="キャンセル">
            <svg width="13" height="13" viewBox="0 0 13 13" stroke="#7a7a7a">
              <path d="M.5.5l12 12M12.500.5l-12 12" />
            </svg>
          </PlainButton>
          <Spacer $size={9} />
          <PlainButton aria-label="入力">
            <svg width="17" height="13" viewBox="0 0 17 13" fill="none" stroke="#7a7a7a">
              <path d="M.5 6.500l5 5L16.500.8" />
            </svg>
          </PlainButton>
          <FxMark>fx</FxMark>
          <Chevron size={12} />
        </Boxed>
        <FormulaInput aria-label="数式バー" />
      </FormulaBar>

      <SheetView>
        <Sheet>
          <colgroup>
            <col style={{ width: 29 }} />
            {COLUMNS.map((c) => (
              <col key={c} style={{ width: c === "A" ? 122 : 70 }} />
            ))}
          </colgroup>
          <thead>
            <tr>
              <ColHead $corner aria-label="すべて選択">
                <svg width="28" height="23" viewBox="0 0 28 23" display="block">
                  <path d="M25 5v15H10z" fill="#6e6e6e" />
                </svg>
              </ColHead>
              {COLUMNS.map((c) => (
                <ColHead key={c} scope="col">
                  {c}
                </ColHead>
              ))}
            </tr>
          </thead>
          <tbody>
            <SheetRow index={1} cells={headingCells} />
            {PEOPLE.map((person, i) => (
              <SheetRow key={person[0]} index={i + 2} cells={personCells(person)} />
            ))}
          </tbody>
        </Sheet>
      </SheetView>
    </Window>
  );
}
